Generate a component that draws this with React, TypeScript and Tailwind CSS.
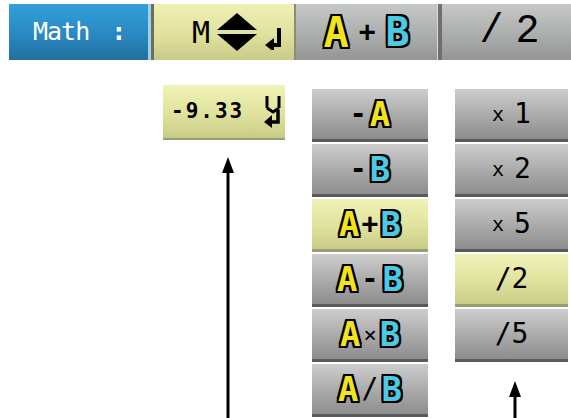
import React from "react";

const outline =
  "[text-shadow:2px_0_#000,-2px_0_#000,0_2px_#000,0_-2px_#000,2px_2px_#000,-2px_-2px_#000,2px_-2px_#000,-2px_2px_#000]";

const mono = "font-['DejaVu_Sans_Mono',monospace]";

function LetterA({ size }: { size: string }) {
  return <span className={`${size} font-bold text-[#f2e31c] ${outline}`}>A</span>;
}

function LetterB({ size }: { size: string }) {
  return <span className={`${size} font-bold text-[#4cc9e3] ${outline}`}>B</span>;
}

function UpDown() {
  return (
    <svg width="40" height="38" viewBox="0 0 40 38">
      <polygon points="20,0 40,17 0,17" fill="#000" />
      <polygon points="0,21 40,21 20,38" fill="#000" />
    </svg>
  );
}

function Enter({ className }: { className?: string }) {
  return (
    <svg width="18" height="22" viewBox="0 0 18 22" className={className}>
      <path d="M14 0 V17 H8" stroke="#000" strokeWidth="4" fill="none" />
      <polygon points="0,17 9,10 9,24" fill="#000" />
    </svg>
  );
}

function VoltEnter() {
  return (
    <svg width="22" height="32" viewBox="0 0 22 32">
      <path d="M5 0 V12 M17 0 V12 M5 12 L11 16 L17 12" stroke="#000" strokeWidth="3" fill="none" />
      <path d="M16 14 V26 H9" stroke="#000" strokeWidth="3.5" fill="none" />
      <polygon points="2,26 10,19 10,32" fill="#000" />
    </svg>
  );
}

function ArrowUp({ height }: { height: number }) {
  return (
    <svg width="14" height={height} viewBox={`0 0 14 ${height}`}>
      <polygon points="7,0 13,16 1,16" fill="#000" />
      <line x1="7" y1="12" x2="7" y2={height} stroke="#000" strokeWidth="3" />
    </svg>
  );
}

const grayRow =
  "h-[53px] flex items-center justify-center bg-[linear-gradient(to_bottom,#cdcdcd,#a9a9a9_55%,#8d8d8d)] border-b-[3px] border-[#5a5a5a]";
const yellowRow =
  "h-[53px] flex items-center justify-center bg-[linear-gradient(to_bottom,#f1f2b8,#dfe29c_55%,#c9cc86)] border-b-[3px] border-[#9c9c72]";

export default function App() {
  return (
    <div className={`w-[571px] h-[418px] bg-white overflow-hidden ${mono}`}>
      {/* top bar */}
      <div className="flex h-[56px] mt-[4px] pl-[9px]">
        <div className="w-[139px] flex items-center pl-[24px] bg-[linear-gradient(to_bottom,#31a0dc,#2a88c0_55%,#22709f)] text-white text-[25px]">
          <span className="tracking-[-1px]">Math</span>
          <span className="ml-[22px] font-bold">:</span>
        </div>
        <div className="w-[3px] bg-[#9bd2ee]" />
        <div className="w-[3px] bg-[#6d6d5a]" />
        <div className="w-[140px] flex items-center pl-[38px] bg-[linear-gradient(to_bottom,#eff0b4,#dfe19c_55%,#c8cb88)]">
          <span className="text-[30px] text-black mr-[7px]">M</span>
          <UpDown />
          <Enter className="ml-[8px] mt-[14px]" />
        </div>
        <div className="w-[2px] bg-[#8c8c70]" />
        <div className="w-[141px] flex items-center justify-center bg-[linear-gradient(to_bottom,#c6c8c8,#acaeae_55%,#939595)]">
          <LetterA size="text-[42px]" />
          <span className="text-[28px] font-bold text-black mx-[10px]">+</span>
          <LetterB size="text-[40px]" />
        </div>
        <div className="w-[1px] bg-[#dadada]" />
        <div className="w-[4px] bg-[#6f6f6f]" />
        <div className="flex-1 flex items-center justify-center pl-[6px] bg-[linear-gradient(to_bottom,#c6c8c8,#acaeae_55%,#939595)] font-['Liberation_Mono',monospace] text-[40px] text-black">
          <span>/</span>
          <span className="ml-[12px]">2</span>
        </div>
      </div>

      {/* dropdowns */}
      <div className="flex mt-[25px]">
        <div className="ml-[163px] w-[122px] flex flex-col">
          <div className="h-[55px] flex items-center pl-[8px] gap-[18px] bg-[linear-gradient(to_bottom,#f1f2b8,#dfe29c_55%,#c9cc86)] border-b-[2px] border-[#9c9c72]">
            <span className="text-[21px] font-bold text-black tracking-[2px]">-9.33</span>
            <VoltEnter />
          </div>
          <div className="mt-[17px] ml-[58px]">
            <ArrowUp height={262} />
          </div>
        </div>

        <div className="ml-[27px] w-[116px] mt-[4px] flex flex-col gap-[2px]">
          <div className={grayRow}>
            <span className="text-[28px] font-bold text-black mr-[3px]">-</span>
            <LetterA size="text-[34px]" />
          </div>
          <div className={grayRow}>
            <span className="text-[28px] font-bold text-black mr-[3px]">-</span>
            <LetterB size="text-[34px]" />
          </div>
          <div className={yellowRow}>
            <LetterA size="text-[34px]" />
            <span className="text-[28px] font-bold text-black mx-[2px]">+</span>
            <LetterB size="text-[34px]" />
          </div>
          <div className={grayRow}>
            <LetterA size="text-[34px]" />
            <span className="text-[28px] font-bold text-black mx-[4px]">-</span>
            <LetterB size="text-[34px]" />
          </div>
          <div className={grayRow}>
            <LetterA size="text-[34px]" />
            <span className="text-[22px] text-black mx-[3px]">×</span>
            <LetterB size="text-[34px]" />
          </div>
          <div className={grayRow}>
            <LetterA size="text-[34px]" />
            <span className="text-[28px] text-black mx-[3px]">/</span>
            <LetterB size="text-[34px]" />
          </div>
        </div>

        <div className="ml-[27px] w-[113px] mt-[4px] flex flex-col">
          <div className="flex flex-col gap-[2px] text-black text-[28px]">
            <div className={grayRow}>
              <span className="text-[20px]">x</span>
              <span className="ml-[10px]">1</span>
            </div>
            <div className={grayRow}>
              <span className="text-[20px]">x</span>
              <span className="ml-[10px]">2</span>
            </div>
            <div className={grayRow}>
              <span className="text-[20px]">x</span>
              <span className="ml-[10px]">5</span>
            </div>
            <div className={yellowRow}>
              <span>/</span>
              <span>2</span>
            </div>
            <div className={grayRow}>
              <span>/</span>
              <span>5</span>
            </div>
          </div>
          <div className="mt-[19px] ml-[53px]">
            <ArrowUp height={40} />
          </div>
        </div>
      </div>
    </div>
  );
}
